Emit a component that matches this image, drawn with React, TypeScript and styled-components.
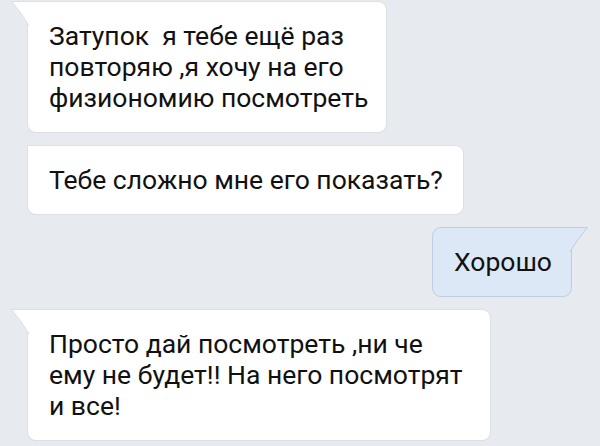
import React from "react";
import styled, { createGlobalStyle } from "styled-components";

const Global = createGlobalStyle`
  html, body {
    margin: 0;
    padding: 0;
    background: #e7ebf0;
  }
  body {
    font-family: Roboto, "Noto Sans", "Liberation Sans", sans-serif;
  }
`;

const Chat = styled.div`
  width: 600px;
  height: 446px;
  box-sizing: border-box;
  padding-top: 2px;
  display: flex;
  flex-direction: column;
  gap: 14.5px;
  background: #e7ebf0;
  overflow: hidden;
`;

const Row = styled.div<{ $out?: boolean }>`
  display: flex;
  justify-content: ${(p) => (p.$out ? "flex-end" : "flex-start")};
  padding: ${(p) => (p.$out ? "0 29px 0 0" : "0 0 0 28px")};
`;

const Bubble = styled.div<{ $out?: boolean; $padRight?: number }>`
  position: relative;
  box-sizing: border-box;
  padding: 18px ${(p) => p.$padRight ?? 20}px 18.5px 21px;
  font-size: 26.5px;
  line-height: 31px;
  color: #111111;
  background: ${(p) => (p.$out ? "#dce8f6" : "#ffffff")};
  border-radius: ${(p) => (p.$out ? "8px 0 8px 8px" : "0 8px 8px 8px")};
  box-shadow: ${(p) =>
    p.$out
      ? "0 0 0 1px #bccfe4, 0 1px 1px rgba(0,0,0,0.06)"
      : "0 0 0 1px #dbe0e7, 0 1px 1px rgba(0,0,0,0.07)"};
  white-space: nowrap;
`;

const TailSvg = styled.svg<{ $out?: boolean }>`
  position: absolute;
  top: -1px;
  ${(p) => (p.$out ? "right: -17px;" : "left: -17px;")}
  width: 18px;
  height: 26px;
  overflow: visible;
`;

function Tail({ out }: { out?: boolean }) {
  const fill = out ? "#dce8f6" : "#ffffff";
  const stroke = out ? "#bccfe4" : "#dbe0e7";
  return (
    <TailSvg $out={out} viewBox="0 0 18 26">
      {out ? (
        <path
          d="M0 25 C4 18 11 8 17.5 0.5 L0 0.5"
          fill={fill}
          stroke={stroke}
          strokeWidth="1"
        />
      ) : (
        <path
          d="M18 25 C14 18 7 8 0.5 0.5 L18 0.5"
          fill={fill}
          stroke={stroke}
          strokeWidth="1"
        />
      )}
    </TailSvg>
  );
}

export default function App() {
  return (
    <>
      <Global />
      <Chat>
        <Row>
          <Bubble $padRight={18}>
            <Tail />
            Затупок&nbsp; я тебе ещё раз
            <br />
            повторяю ,я хочу на его
            <br />
            физиономию посмотреть
          </Bubble>
        </Row>
        <Row>
          <Bubble>Тебе сложно мне его показать?</Bubble>
        </Row>
        <Row $out>
          <Bubble $out $padRight={19}>
            <Tail out />
            Хорошо
          </Bubble>
        </Row>
        <Row>
          <Bubble $padRight={27}>
            <Tail />
            Просто дай посмотреть ,ни че
            <br />
            ему не будет!! На него посмотрят
            <br />и все!
          </Bubble>
        </Row>
      </Chat>
    </>
  );
}
